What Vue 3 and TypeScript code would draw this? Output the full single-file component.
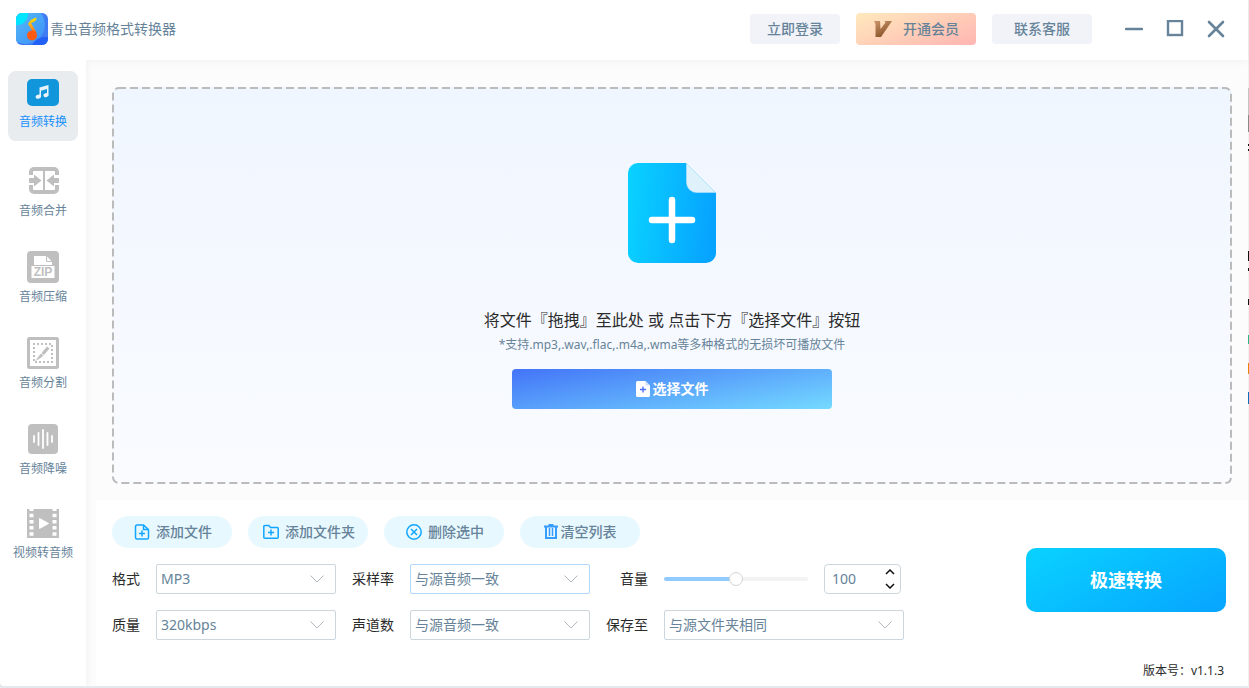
<script setup lang="ts">
import { ref } from 'vue'

interface NavItem {
  id: string
  label: string
  height: number
}

const navItems: NavItem[] = [
  { id: 'convert', label: '音频转换', height: 29 },
  { id: 'merge', label: '音频合并', height: 32 },
  { id: 'zip', label: '音频压缩', height: 32 },
  { id: 'split', label: '音频分割', height: 32 },
  { id: 'denoise', label: '音频降噪', height: 32 },
  { id: 'video', label: '视频转音频', height: 30 },
]

const active = ref('convert')
const format = ref('MP3')
const quality = ref('320kbps')
const sampleRate = ref('与源音频一致')
const channels = ref('与源音频一致')
const saveTo = ref('与源文件夹相同')
const volume = ref(100)

function step(delta: number): void {
  volume.value = Math.min(200, Math.max(0, Number(volume.value) + delta))
}
</script>

<template>
  <div class="window">
    <header class="titlebar">
      <svg class="logo" width="32" height="32" viewBox="0 0 32 32" aria-hidden="true">
        <defs>
          <linearGradient id="logo-bg" x1="0" y1="0" x2="1" y2="1">
            <stop offset="0" stop-color="#5cc8fb" />
            <stop offset="1" stop-color="#3b8df5" />
          </linearGradient>
          <linearGradient id="logo-note" x1="0" y1="0" x2="0" y2="1">
            <stop offset="0" stop-color="#ffe600" />
            <stop offset="0.5" stop-color="#ffa51a" />
            <stop offset="1" stop-color="#ff4a12" />
          </linearGradient>
          <clipPath id="logo-clip"><rect width="32" height="32" rx="6" /></clipPath>
        </defs>
        <g clip-path="url(#logo-clip)">
          <rect width="32" height="32" fill="#3f7cf4" />
          <circle cx="10" cy="12" r="19" fill="url(#logo-bg)" />
          <circle cx="1" cy="1" r="11" fill="#00e5ff" />
          <circle cx="29" cy="38" r="14" fill="#2360f5" />
          <path d="M12 11c1.500-3.500 4.500-5.500 8.500-6.500 0 3-1.500 4.500-5.500 5.500l5.500 9.500-1.500 2.500z" fill="url(#logo-note)" />
          <circle cx="16" cy="22.500" r="5" fill="#ff5a14" />
        </g>
      </svg>
      <h1 class="app-name">青虫音频格式转换器</h1>
      <div class="actions">
        <button type="button" class="pill login">立即登录</button>
        <button type="button" class="pill vip">
          <svg width="19" height="18" viewBox="0 0 19 18" aria-hidden="true">
            <defs>
              <linearGradient id="vip-v" x1="0" y1="0" x2="0.500" y2="1">
                <stop offset="0" stop-color="#c99668" />
                <stop offset="1" stop-color="#8a532a" />
              </linearGradient>
            </defs>
            <path d="M1 1h6l.5 8L12.500 2.500 11.500 1H19L8 17H2.500L2.500 4z" fill="url(#vip-v)" />
          </svg>
          开通会员
        </button>
        <button type="button" class="pill service">联系客服</button>
      </div>
      <div class="window-buttons">
        <button type="button" aria-label="最小化">
          <svg width="18" height="18" viewBox="0 0 18 18"><path d="M1 9h16" stroke-width="2.500" stroke-linecap="round" /></svg>
        </button>
        <button type="button" aria-label="最大化">
          <svg width="18" height="18" viewBox="0 0 18 18"><rect x="2" y="1" width="14" height="14" stroke-width="2.400" /></svg>
        </button>
        <button type="button" aria-label="关闭">
          <svg width="18" height="18" viewBox="0 0 18 18"><path d="M2 2l14 14M16 2L2 16" stroke-width="2.600" stroke-linecap="round" /></svg>
        </button>
      </div>
    </header>

    <div class="body">
      <nav class="sidebar">
        <button
          v-for="item in navItems"
          :key="item.id"
          type="button"
          class="nav-item"
          :class="{ active: active === item.id }"
          @click="active = item.id"
        >
          <svg width="32" :height="item.height" :viewBox="`0 0 32 ${item.height}`" aria-hidden="true">
            <template v-if="item.id === 'convert'">
              <rect width="32" height="27" rx="5" fill="#1296db" />
              <g fill="#e8f4fb">
                <path d="M12.500 8.500L21.500 6v10.500h-1.500V10L14 11.700v6.500h-1.500z" />
                <ellipse cx="11.300" cy="17.700" rx="2.700" ry="2" transform="rotate(-15 11.300 17.700)" />
                <ellipse cx="18.900" cy="16.200" rx="2.600" ry="2" transform="rotate(-15 18.900 16.200)" />
              </g>
            </template>
            <template v-else-if="item.id === 'merge'">
              <path
                d="M4 10V7a3 3 0 0 1 3-3h20a3 3 0 0 1 3 3v3M30 20v4a3 3 0 0 1-3 3H7a3 3 0 0 1-3-3v-4"
                fill="none"
                stroke="#bfbfbf"
                stroke-width="4"
              />
              <path d="M17 4v23" fill="none" stroke="#bfbfbf" stroke-width="2" />
              <path d="M2 13h5V9.500l7.500 6L7 21.500V18H2zM32 13h-5V9.500l-7.500 6 7.500 6V18h5z" fill="#bfbfbf" />
            </template>
            <template v-else-if="item.id === 'zip'">
              <rect width="32" height="32" rx="4" fill="#bfbfbf" />
              <path d="M7 5h12.500l5.500 5.500V14H7z" fill="#fff" />
              <path d="M19.500 5v5.500H25" fill="none" stroke="#bfbfbf" />
              <rect x="4.500" y="15" width="23" height="12" fill="#fff" />
              <text x="16" y="25" text-anchor="middle" class="zip-text">ZIP</text>
            </template>
            <template v-else-if="item.id === 'split'">
              <rect x="1.500" y="1.500" width="29" height="29" rx="1" fill="none" stroke="#bfbfbf" stroke-width="3" />
              <rect x="7" y="7" width="18" height="18" fill="none" stroke="#bfbfbf" stroke-width="2" stroke-dasharray="2 2" stroke-dashoffset="1" />
              <path d="M20 9.500l2.500 2L17 18l-2.500-2zM14 16.500l2.500 2-3 2.500-5 3 3-4.500z" fill="#bfbfbf" />
            </template>
            <template v-else-if="item.id === 'denoise'">
              <rect x="1" y="1" width="30" height="30" rx="4" fill="#bfbfbf" />
              <path d="M7 13v6M11.500 10v12M16 7v18M20.500 10v12M25 13v6" stroke="#fff" stroke-width="1.800" stroke-linecap="round" />
            </template>
            <template v-else>
              <rect y="0" width="32" height="29" fill="#bfbfbf" />
              <path d="M4.500 -1.500V30M27.500 -1.500V30" fill="none" stroke="#fff" stroke-width="4" stroke-dasharray="3.500 2.700" />
              <path d="M12.500 9.500l9 5-9 5z" fill="#fff" stroke="#fff" stroke-linejoin="round" />
            </template>
          </svg>
          <span>{{ item.label }}</span>
        </button>
      </nav>

      <main class="content">
        <section class="dropzone">
          <svg class="dashes" aria-hidden="true"><rect /></svg>
          <svg class="file-art" width="88" height="100" viewBox="0 0 88 100" aria-hidden="true">
            <defs>
              <linearGradient id="file-fill" x1="0" y1="0" x2="1" y2="0.100">
                <stop offset="0" stop-color="#09d2ff" />
                <stop offset="1" stop-color="#07a4ff" />
              </linearGradient>
            </defs>
            <path d="M10 0h48l30 30v60a10 10 0 0 1-10 10H10a10 10 0 0 1-10-10V10A10 10 0 0 1 10 0z" fill="url(#file-fill)" />
            <path d="M58.500.500V19.500a10 10 0 0 0 10 10H87.500z" fill="#dff2fc" stroke="#b5e2fb" stroke-width=".6" />
            <path d="M44 37v40M24 57h40" stroke="#fff" stroke-width="6.500" stroke-linecap="round" />
          </svg>
          <p class="prompt">将文件『拖拽』至此处 或 点击下方『选择文件』按钮</p>
          <p class="note">*支持.mp3,.wav,.flac,.m4a,.wma等多种格式的无损坏可播放文件</p>
          <button type="button" class="choose">
            <svg width="14" height="16" viewBox="0 0 14 16" aria-hidden="true">
              <path d="M1.500 0H9.500L14 4.500v10a1.500 1.500 0 0 1-1.500 1.500h-11A1.500 1.500 0 0 1 0 14.500v-13A1.500 1.500 0 0 1 1.500 0z" fill="#fff" />
              <path d="M9.500 0v4.500H14z" fill="#cfe0ff" />
              <path d="M7 5.500v6M4 8.500h6" stroke="#4a6cf7" stroke-width="1.300" />
            </svg>
            选择文件
          </button>
        </section>

        <section class="panel">
          <div class="settings">
            <div class="toolbar">
              <button type="button">
                <svg width="16" height="16" viewBox="0 0 16 16" aria-hidden="true">
                  <path d="M9.500 1H3a1.500 1.500 0 0 0-1.500 1.500v11A1.500 1.500 0 0 0 3 15h10a1.500 1.500 0 0 0 1.500-1.500V5.500zM9.500 1v4.500h5M8 6.500v6M5 9.500h6" />
                </svg>
                添加文件
              </button>
              <button type="button">
                <svg width="16" height="16" viewBox="0 0 16 16" aria-hidden="true">
                  <path d="M.8 2.500a1 1 0 0 1 1-1h4L7.500 3.500h6.700a1 1 0 0 1 1 1v8.700a1 1 0 0 1-1 1H1.800a1 1 0 0 1-1-1zM8 5.500v6M5 8.500h6" />
                </svg>
                添加文件夹
              </button>
              <button type="button">
                <svg width="16" height="16" viewBox="0 0 16 16" aria-hidden="true">
                  <circle cx="8" cy="8" r="7.200" /><path d="M5 5l6 6M11 5l-6 6" />
                </svg>
                删除选中
              </button>
              <button type="button" class="clear">
                <svg width="14" height="16" viewBox="0 0 14 16" aria-hidden="true">
                  <path d="M0 2.500h14M4.500 1h5M2 3v11h10V3" stroke-width="2" />
                  <path d="M5.500 4v8M8.500 4v8" stroke-width="1.500" />
                </svg>
                清空列表
              </button>
            </div>

            <div class="fields">
              <label for="format">格式</label>
              <div class="select">
                <select id="format" v-model="format"><option>MP3</option><option>WAV</option><option>FLAC</option></select>
                <svg width="14" height="8" viewBox="0 0 14 8" aria-hidden="true"><path d="M.5.500L7 7 13.500.500" /></svg>
              </div>
              <label for="rate">采样率</label>
              <div class="select focused">
                <select id="rate" v-model="sampleRate"><option>与源音频一致</option><option>44100Hz</option></select>
                <svg width="14" height="8" viewBox="0 0 14 8" aria-hidden="true"><path d="M.5.500L7 7 13.500.500" /></svg>
              </div>
              <label for="volume">音量</label>
              <div class="volume">
                <input id="volume" v-model.number="volume" type="range" min="0" max="200" />
                <div class="stepper">
                  <input v-model.number="volume" type="number" min="0" max="200" aria-label="音量数值" />
                  <div class="steps">
                    <button type="button" aria-label="增加" @click="step(1)">
                      <svg width="10" height="6" viewBox="0 0 10 6"><path d="M1 5l4-4 4 4" /></svg>
                    </button>
                    <button type="button" aria-label="减少" @click="step(-1)">
                      <svg width="10" height="6" viewBox="0 0 10 6"><path d="M1 1l4 4 4-4" /></svg>
                    </button>
                  </div>
                </div>
              </div>

              <label for="quality">质量</label>
              <div class="select">
                <select id="quality" v-model="quality"><option>320kbps</option><option>192kbps</option></select>
                <svg width="14" height="8" viewBox="0 0 14 8" aria-hidden="true"><path d="M.5.500L7 7 13.500.500" /></svg>
              </div>
              <label for="channels">声道数</label>
              <div class="select">
                <select id="channels" v-model="channels"><option>与源音频一致</option><option>立体声</option></select>
                <svg width="14" height="8" viewBox="0 0 14 8" aria-hidden="true"><path d="M.5.500L7 7 13.500.500" /></svg>
              </div>
              <label for="save">保存至</label>
              <div class="select">
                <select id="save" v-model="saveTo"><option>与源文件夹相同</option><option>自定义</option></select>
                <svg width="14" height="8" viewBox="0 0 14 8" aria-hidden="true"><path d="M.5.500L7 7 13.500.500" /></svg>
              </div>
            </div>
          </div>

          <div class="run">
            <button type="button" class="start">极速转换</button>
            <p class="version">版本号：v1.1.3</p>
          </div>
        </section>
      </main>
    </div>
  </div>
</template>

<style>
/* The desktop shows as a thin strip beyond the window's right and bottom edges. */
body {
  margin: 0;
  background-color: #e3e9ec;
  background-image: linear-gradient(
    #f0f0f0 88px,
    #c4c4c4 88px 115px,
    #8a8a8a 115px 132px,
    #f0f0f0 132px 144px,
    #111 144px 146px,
    #f0f0f0 146px 149px,
    #111 149px 151px,
    #f0f0f0 151px 251px,
    #111 251px 261px,
    #f0f0f0 261px 268px,
    #111 268px 271px,
    #f0f0f0 271px 299px,
    #111 299px 305px,
    #f0f0f0 305px 335px,
    #2bb58a 335px 344px,
    #f0f0f0 344px 363px,
    #ee8208 363px 374px,
    #f0f0f0 374px 392px,
    #0d6fb8 392px 404px,
    #f0f0f0 404px
  );
  background-position: right top;
  background-repeat: no-repeat;
  background-size: 1px 100%;
}
</style>

<style scoped>
* {
  box-sizing: border-box;
}

.window {
  display: flex;
  flex-direction: column;
  min-height: calc(100vh - 2px);
  margin: 0 1px 2px 0;
  background: #fff;
  border-radius: 0 0 4px 4px;
  color: #2b2b2b;
  font-family: "Noto Sans", "Noto Sans CJK SC", sans-serif;
  font-size: 14px;
  line-height: 20px;
}

button,
input,
select {
  margin: 0;
  padding: 0;
  border: 0;
  background: none;
  color: #668399;
  font: inherit;
}

button {
  cursor: pointer;
}

h1,
p {
  margin: 0;
}

.titlebar {
  position: relative;
  display: flex;
  align-items: center;
  height: 60px;
  padding: 0 23px 2px 16px;
  background: #fff;
  box-shadow: 0 0 10px rgba(0, 0, 0, 0.06);
}

.app-name {
  margin-left: 2px;
  color: #668399;
  font-size: 14px;
  font-weight: 400;
}

.actions {
  display: flex;
  align-items: center;
  gap: 16px;
  margin-left: auto;
}

.pill {
  display: flex;
  align-items: center;
  justify-content: center;
  height: 30px;
  border-radius: 4px;
  background: #f1f3f9;
  font-weight: 500;
}

.login {
  width: 90px;
}

.service {
  width: 100px;
}

.vip {
  width: 120px;
  height: 32px;
  gap: 11px;
  background: linear-gradient(160deg, #ffe9bd, #ffb5b2);
}

.window-buttons {
  display: flex;
  gap: 23px;
  margin-left: 33px;
}

.window-buttons svg {
  display: block;
  fill: none;
  stroke: #668399;
}

.body {
  display: flex;
  flex: 1;
}

.sidebar {
  position: relative;
  display: flex;
  flex-direction: column;
  gap: 16px;
  width: 86px;
  padding: 11px 8px;
  border-radius: 0 0 0 4px;
  background: #fff;
  box-shadow: 0 2px 10px rgba(0, 0, 0, 0.06);
  clip-path: inset(0 -12px 0 0);
}

.nav-item {
  display: flex;
  flex-direction: column;
  align-items: center;
  gap: 4px;
  height: 70px;
  padding-top: 8px;
  border-radius: 8px;
  font-size: 12px;
  white-space: nowrap;
}

.nav-item svg {
  flex: none;
}

.nav-item.active {
  background: #e8ecef;
  color: #1890ff;
}

.zip-text {
  fill: #bfbfbf;
  font: bold 12px "Liberation Sans", sans-serif;
}

.content {
  display: flex;
  flex: 1;
  flex-direction: column;
  min-width: 0;
  background: #fcfcfc;
}

.dropzone {
  position: relative;
  display: flex;
  flex: 1;
  flex-direction: column;
  align-items: center;
  justify-content: center;
  margin: 27px 16px 16px 26px;
  border-radius: 8px;
  background: linear-gradient(#f0f6ff, #f9fbff);
}

.dashes {
  position: absolute;
  inset: 0;
  width: 100%;
  height: 100%;
  pointer-events: none;
}

.dashes rect {
  x: 1px;
  y: 1px;
  width: calc(100% - 2px);
  height: calc(100% - 2px);
  rx: 6px;
  fill: none;
  stroke: #bbb;
  stroke-width: 2px;
  stroke-dasharray: 8 4;
  stroke-dashoffset: 1;
}

.prompt {
  margin-top: 45px;
  font-size: 16px;
  line-height: 24px;
}

.note {
  margin-top: 3px;
  color: #668399;
  font-size: 12px;
}

.choose {
  display: flex;
  align-items: center;
  justify-content: center;
  gap: 3px;
  width: 320px;
  height: 40px;
  margin-top: 14px;
  border-radius: 4px;
  background: linear-gradient(170deg, #4374f8, #74daff);
  color: #fff;
  font-weight: 700;
}

.panel {
  display: flex;
  justify-content: space-between;
  margin-left: 10px;
  padding: 16px 22px 5px 16px;
  border-radius: 0 0 4px 0;
  background: #fff;
}

.toolbar {
  display: flex;
  gap: 16px;
}

.toolbar button {
  display: flex;
  align-items: center;
  justify-content: center;
  gap: 6px;
  width: 120px;
  height: 32px;
  padding-left: 2px;
  border-radius: 16px;
  background: #e8f8ff;
  font-weight: 500;
}

.toolbar .clear {
  gap: 3px;
  padding-left: 0;
}

.toolbar svg {
  fill: none;
  stroke: #12a5ff;
  stroke-width: 1.5px;
}

.toolbar .clear svg {
  stroke: #369cff;
}

.fields {
  display: grid;
  grid-template-columns: 28px 180px 42px 180px 42px 240px;
  gap: 16px;
  align-items: center;
  margin-top: 16px;
}

.fields label {
  text-align: right;
  white-space: nowrap;
}

.select {
  position: relative;
}

.select select {
  display: block;
  width: 100%;
  height: 30px;
  padding-left: 4px;
  border: 1px solid #ccd6dd;
  border-radius: 2px;
  background: #fff;
  appearance: none;
}

.select.focused select {
  border-color: #b3d8ff;
}

.select svg {
  position: absolute;
  top: 11px;
  right: 12px;
  fill: none;
  stroke: #b2b6bd;
  pointer-events: none;
}

.volume {
  display: flex;
  align-items: center;
  gap: 16px;
}

.volume input[type='range'] {
  width: 144px;
  height: 16px;
  appearance: none;
}

.volume input[type='range']::-webkit-slider-runnable-track {
  height: 4px;
  border-radius: 2px;
  background: linear-gradient(90deg, #91caff 50%, #f3f3f3 50%);
}

.volume input[type='range']::-webkit-slider-thumb {
  width: 14px;
  height: 14px;
  margin-top: -5px;
  border: 1px solid #d3d3d3;
  border-radius: 50%;
  background: #fff;
  appearance: none;
}

.stepper {
  display: flex;
  width: 77px;
  height: 30px;
  border: 1px solid #ccd6dd;
  border-radius: 4px;
}

.stepper input {
  flex: 1;
  min-width: 0;
  padding-left: 7px;
  appearance: textfield;
}

.stepper input::-webkit-inner-spin-button {
  display: none;
}

.steps {
  display: flex;
  flex-direction: column;
  width: 20px;
}

.steps button {
  display: flex;
  flex: 1;
  align-items: center;
  justify-content: center;
}

.steps svg {
  fill: none;
  stroke: #111;
  stroke-width: 1.5px;
}

.run {
  display: flex;
  flex-direction: column;
  align-items: flex-end;
  justify-content: space-between;
  padding-top: 32px;
}

.start {
  width: 200px;
  height: 64px;
  border-radius: 10px;
  background: linear-gradient(150deg, #09d2ff, #07a4ff);
  color: #fff;
  font-size: 18px;
  font-weight: 700;
}

.version {
  margin: 49px 2px 0 0;
  font-size: 12px;
}
</style>
